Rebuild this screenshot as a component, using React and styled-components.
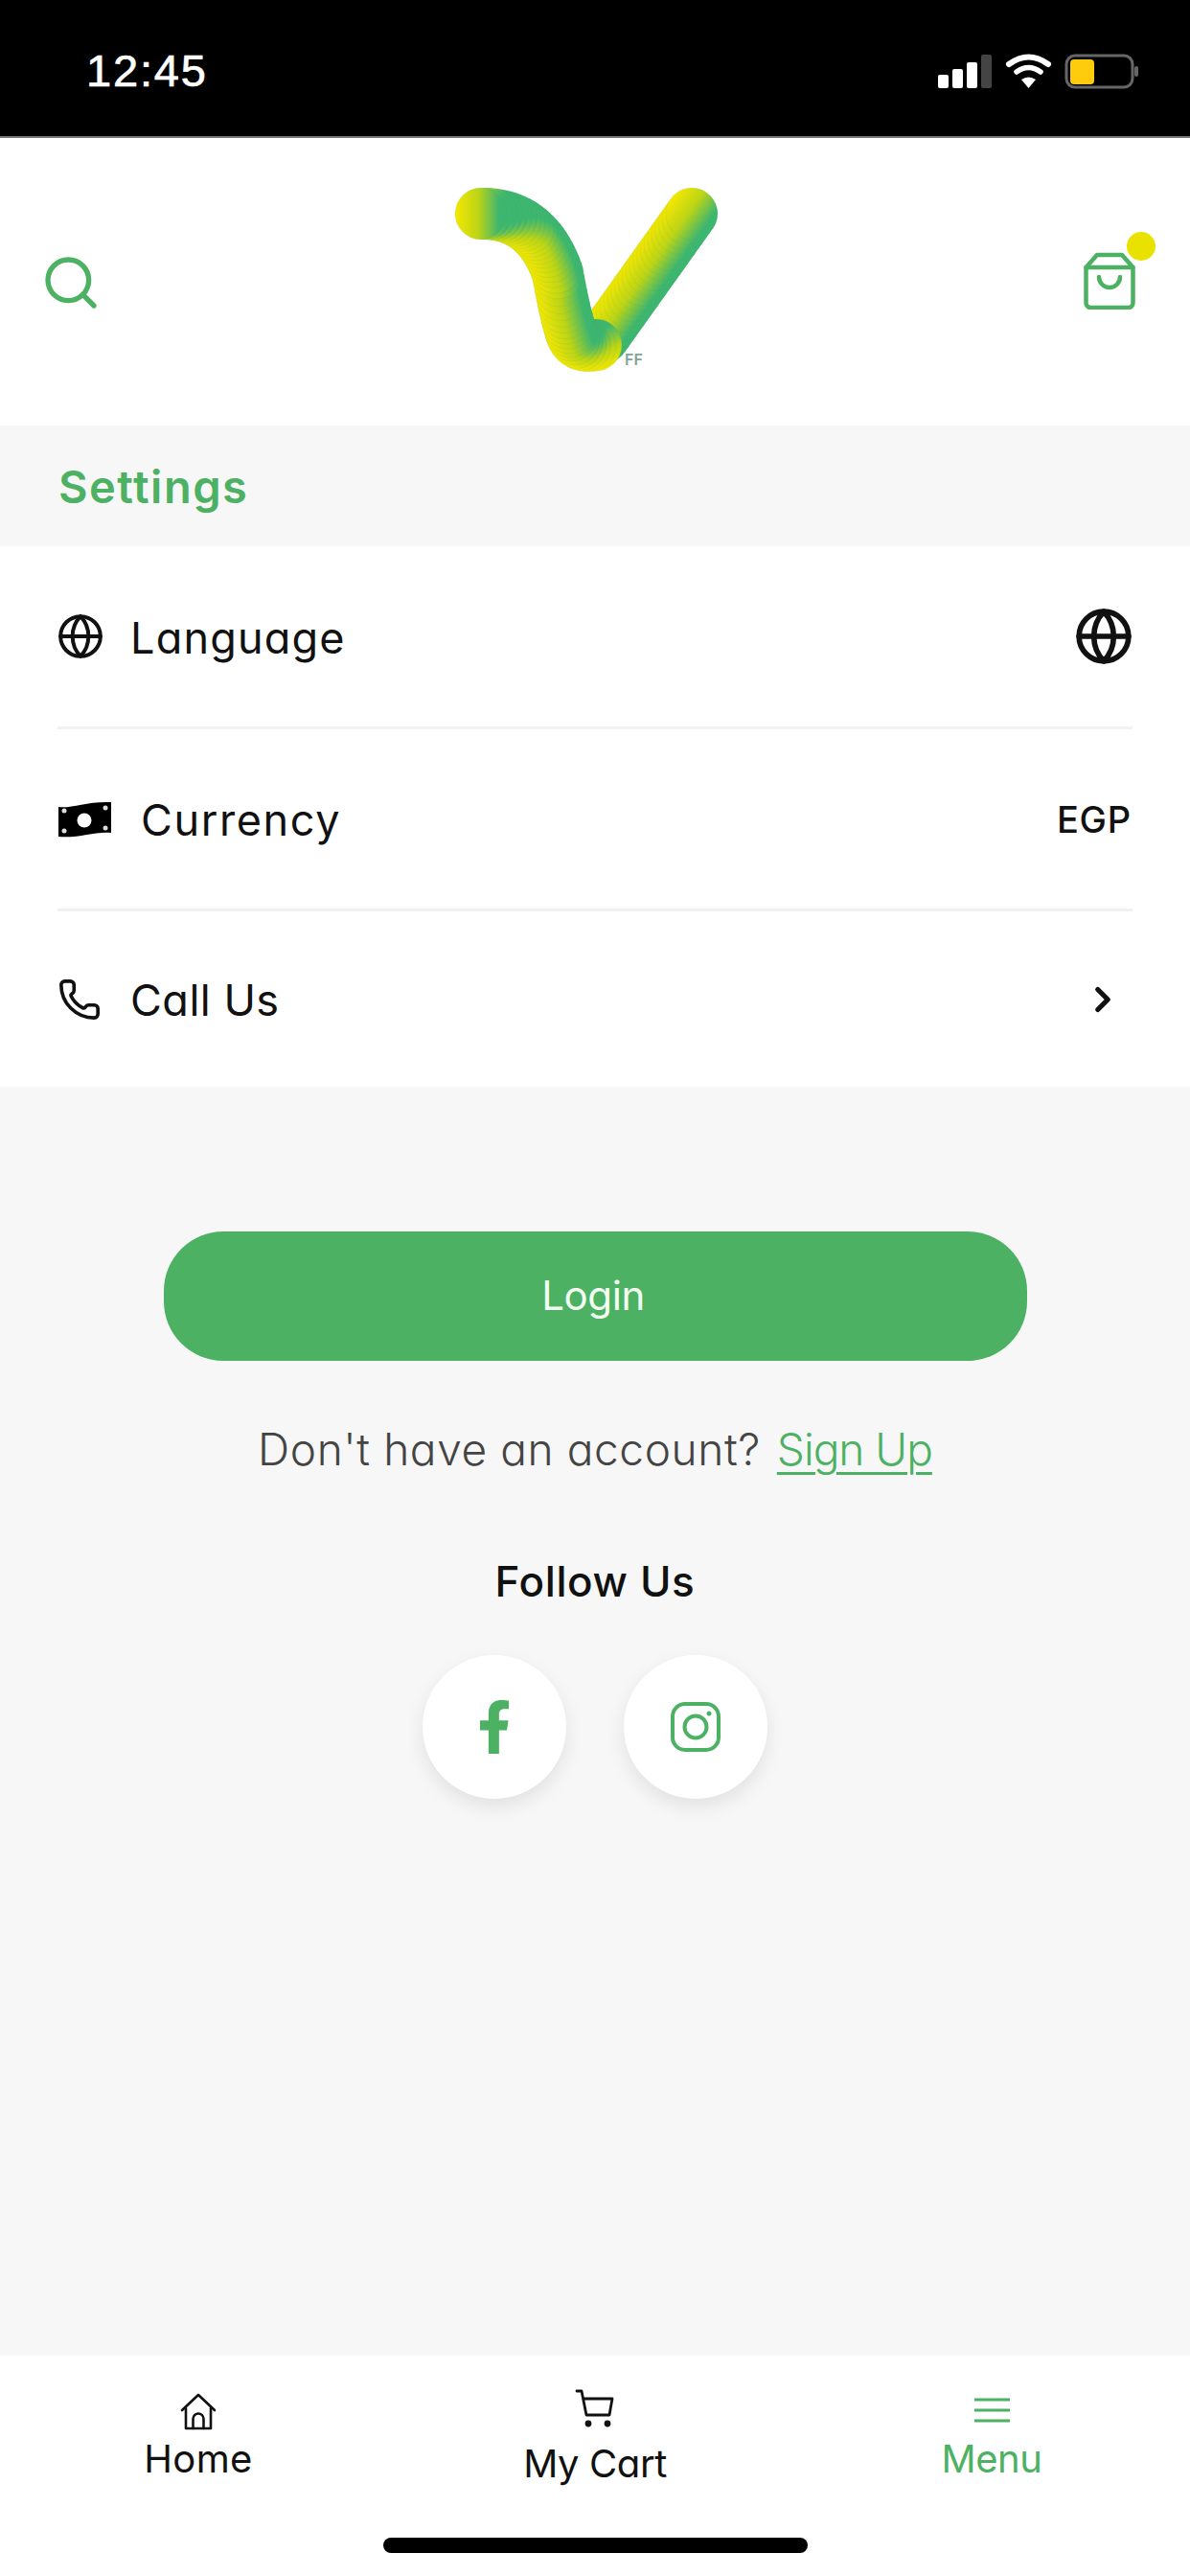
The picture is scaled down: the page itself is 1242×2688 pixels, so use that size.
import React from "react";
import styled, { createGlobalStyle } from "styled-components";
import { Globe, Phone, ChevronRight, Search } from "lucide-react";
import { FaFacebookF } from "react-icons/fa";

const GREEN = "#4db163";
const INK = "#111";

const Global = createGlobalStyle`
  html, body { margin: 0; padding: 0; background: #fff; }
  * { box-sizing: border-box; }
  body { font-family: Inter, "Open Sans", "Liberation Sans", sans-serif; font-feature-settings: "cv11" 1; color: ${INK}; }
`;

const Page = styled.div`
  width: 1242px; height: 2688px; display: flex; flex-direction: column; background: #f7f7f7; overflow: hidden;
`;
const StatusBar = styled.div`
  height: 144px; flex: none; background: #000; border-bottom: 2px solid #777;
  display: flex; justify-content: space-between; align-items: flex-start;
  padding: 47px 46px 0 90px; color: #fff;
`;
const Clock = styled.div`
  font-family: "Liberation Sans", sans-serif; font-size: 47px; line-height: 54px; letter-spacing: 1.8px; font-weight: 400;
  -webkit-text-stroke: .7px #fff;
`;
const StatusIcons = styled.svg`
  display: block; margin-top: 8px;
`;
const Header = styled.header`
  height: 300px; flex: none; background: #fff; display: grid; grid-template-columns: 1fr auto 1fr; align-items: start;
`;
const SearchBtn = styled.div`
  margin: 119px 0 0 42px; color: ${GREEN}; line-height: 0; justify-self: start;
`;
const Logo = styled.svg`
  display: block; margin-top: 36px;
`;
const BagWrap = styled.div`
  position: relative; justify-self: end; width: 54px; height: 60px; margin: 119px 57px 0 0; line-height: 0;
`;
const BagDot = styled.span`
  position: absolute; left: 45px; top: -21px; width: 30px; height: 30px; border-radius: 50%; background: #e9e200;
`;
const SectionBand = styled.div`
  height: 126px; flex: none; display: flex; align-items: center; padding: 0 62px 0 61px;
  color: ${GREEN}; font-size: 47px; font-weight: 600; letter-spacing: 1.5px;
`;
const List = styled.div`
  flex: none; background: #fff; padding: 0 60px;
`;
const Row = styled.div`
  height: ${p => p.$h}px; display: flex; align-items: center; justify-content: space-between;
  border-bottom: ${p => (p.$last ? "none" : "3px solid #f1f1f1")};
`;
const RowLeft = styled.div`
  display: flex; align-items: center; gap: ${p => p.$gap}px;
`;
const RowLabel = styled.span`
  font-size: 45px; font-weight: 400; letter-spacing: ${p => p.$ls}px; color: ${INK}; padding-top: 2px;
`;
const RowValue = styled.span`
  font-size: 38px; font-weight: 500; letter-spacing: .8px; margin-right: 1px;
`;
const RowIconRight = styled.div`
  line-height: 0; margin-right: ${p => p.$mr}px;
`;
const Main = styled.main`
  flex: 1; display: flex; flex-direction: column; align-items: center; padding-top: 151px;
`;
const LoginButton = styled.button`
  width: 901px; height: 135px; border: 0; border-radius: 62px; background: ${GREEN}; color: #f2fff2;
  font: 400 42px Inter, sans-serif; font-feature-settings: "cv11" 1; letter-spacing: -.4px; padding: 0 4px 2px 0;
`;
const AccountLine = styled.p`
  margin: 62px 0 0; font-size: 46px; font-weight: 300; line-height: 60px; color: #444; letter-spacing: .6px;
  display: flex; gap: 17px;
`;
const SignUp = styled.a`
  color: ${GREEN}; letter-spacing: -1px; text-decoration: underline; text-underline-offset: 7px; text-decoration-thickness: 3px;
`;
const FollowTitle = styled.h2`
  margin: 81px 0 0; font-size: 44px; line-height: 54px; font-weight: 500; color: ${INK}; letter-spacing: .6px;
`;
const Socials = styled.div`
  display: flex; gap: 60px; margin-top: 50px;
`;
const SocialCircle = styled.a`
  width: 150px; height: 150px; border-radius: 50%; background: #fff; display: flex; align-items: center; justify-content: center;
  box-shadow: 0 8px 20px rgba(0,0,0,.09); color: ${GREEN};
`;
const BottomNav = styled.nav`
  height: 230px; flex: none; background: #fff; display: flex; flex-direction: column;
`;
const NavGrid = styled.div`
  display: grid; grid-template-columns: repeat(3, 1fr); height: 190px;
`;
const NavItem = styled.div`
  display: flex; flex-direction: column; align-items: center; padding-top: ${p => p.$top}px;
  color: ${p => (p.$active ? GREEN : INK)};
`;
const NavIcon = styled.svg`
  display: block; flex: none;
`;
const NavLabel = styled.span`
  font-size: 40px; line-height: 46px; font-weight: 400; letter-spacing: ${p => p.$ls}px; margin-top: ${p => p.$gap}px;
`;
const HomeBar = styled.div`
  width: 443px; height: 16px; border-radius: 8px; background: #000; align-self: center;
`;

// Logo: a tube of overlapping discs running along the V. Each disc's gradient
// lies across the tube; near the start of the left arm it turns horizontal.
const quad = (a, b, c, t) => [
  (1 - t) * (1 - t) * a[0] + 2 * (1 - t) * t * b[0] + t * t * c[0],
  (1 - t) * (1 - t) * a[1] + 2 * (1 - t) * t * b[1] + t * t * c[1],
];
const rightArm = [];
for (let i = 0; i <= 24; i++) {
  const t = i / 24;
  rightArm.push([630 + (722 - 630) * t, 352 + (223 - 352) * t]);
}
const leftArm = [];
[
  [[622, 360], [603, 364], [597, 350], 6],
  [[597, 350], [590, 330], [582, 285], 11],
  [[582, 285], [560, 222], [502, 223], 20],
].forEach(([a, b, c, n]) => {
  for (let i = 0; i < n; i++) leftArm.push(quad(a, b, c, i / n));
  if (n === 20) leftArm.push(c);
});
const withFlow = (pts, blendCount) =>
  pts.map((p, i) => {
    const a = pts[Math.max(i - 1, 0)];
    const b = pts[Math.min(i + 1, pts.length - 1)];
    const dx = b[0] - a[0];
    const dy = b[1] - a[1];
    const len = Math.hypot(dx, dy) || 1;
    const fromEnd = pts.length - 1 - i;
    const k = blendCount ? Math.max(0, 1 - fromEnd / blendCount) : 0;
    const gx = (-dy / len) * (1 - k) + k;
    const gy = (dx / len) * (1 - k);
    const norm = Math.hypot(gx, gy) || 1;
    return { x: p[0], y: p[1], gx: gx / norm, gy: gy / norm };
  });
const discs = [...withFlow(rightArm, 0), ...withFlow(leftArm, 10)];

const LogoMark = () => (
  <Logo width="342" height="220" viewBox="450 180 342 220">
    <defs>
      {discs.map((d, i) => (
        <linearGradient
          key={i}
          id={`tube${i}`}
          x1={0.5 - d.gx / 2}
          y1={0.5 - d.gy / 2}
          x2={0.5 + d.gx / 2}
          y2={0.5 + d.gy / 2}
        >
          <stop offset="0" stopColor="#f6e800" />
          <stop offset=".45" stopColor="#bcd416" />
          <stop offset=".85" stopColor="#3db670" />
          <stop offset="1" stopColor="#3db670" />
        </linearGradient>
      ))}
      <filter id="soft"><feGaussianBlur stdDeviation=".7" /></filter>
    </defs>
    <g filter="url(#soft)">
      {discs.map((d, i) => (
        <circle key={i} cx={d.x} cy={d.y} r="27" fill={`url(#tube${i})`} stroke="#3a9e5c" strokeOpacity=".1" />
      ))}
    </g>
    <text x="652" y="381" fontSize="16" fontWeight="600" fill="#7fa594" fontFamily="Inter, sans-serif">FF</text>
  </Logo>
);

const StatusGlyphs = () => (
  <StatusIcons width="227" height="38" viewBox="0 0 227 38">
    <rect x="10" y="23" width="11" height="14" rx="2" fill="#fff" />
    <rect x="25" y="17" width="11" height="20" rx="2" fill="#fff" />
    <rect x="40" y="10" width="11" height="27" rx="2" fill="#fff" />
    <rect x="55" y="2" width="11" height="35" rx="2" fill="#444" />
    <path d="M84 12 Q104.500 -3 125 12" fill="none" stroke="#fff" strokeWidth="6" strokeLinecap="round" />
    <path d="M92 20 Q104.500 11 117 20" fill="none" stroke="#fff" strokeWidth="5.500" strokeLinecap="round" />
    <path d="M97 28 Q104.500 23 112 28 L104.500 37 Z" fill="#fff" />
    <rect x="144" y="3" width="69" height="33" rx="9" fill="none" stroke="#666" strokeWidth="3" />
    <rect x="148" y="7" width="25" height="26" rx="4" fill="#ffcb0c" />
    <rect x="215" y="14" width="4" height="11" rx="2" fill="#666" />
  </StatusIcons>
);

const BagIcon = () => (
  <svg width="54" height="60" viewBox="0 0 54 60" fill="none" stroke={GREEN} strokeWidth="4.500" strokeLinecap="round" strokeLinejoin="round">
    <path d="M2.500 16 V53 a5 5 0 0 0 5 5 H46.500 a5 5 0 0 0 5 -5 V16 L40 3 H14 Z" />
    <path d="M2.500 16 H51.500" />
    <path d="M16 26 a11 11 0 0 0 22 0" />
  </svg>
);

const MoneyIcon = () => (
  <svg width="57" height="38" viewBox="0 0 57 38">
    <path d="M1 6 C14 8 30 0 56 1 V33 C40 31 22 39 1 37 Z" fill="#000" />
    <circle cx="28" cy="20" r="7.500" fill="#fff" />
    <circle cx="7" cy="10" r="2.500" fill="#ddd" />
    <circle cx="50" cy="7" r="2.500" fill="#ddd" />
    <circle cx="7" cy="31" r="2.500" fill="#ddd" />
    <circle cx="50" cy="28" r="2.500" fill="#ddd" />
  </svg>
);

const InstagramIcon = () => (
  <svg width="52" height="52" viewBox="0 0 52 52" fill="none" stroke={GREEN} strokeWidth="4">
    <rect x="2" y="2" width="48" height="48" rx="13" />
    <circle cx="26" cy="26" r="11.500" />
    <circle cx="40" cy="12" r="2.500" fill={GREEN} stroke="none" />
  </svg>
);

export default function App() {
  return (
    <Page>
      <Global />
      <StatusBar>
        <Clock>12:45</Clock>
        <StatusGlyphs />
      </StatusBar>
      <Header>
        <SearchBtn><Search size={64} strokeWidth={2} /></SearchBtn>
        <LogoMark />
        <BagWrap><BagIcon /><BagDot /></BagWrap>
      </Header>
      <SectionBand>Settings</SectionBand>
      <List>
        <Row $h={191}>
          <RowLeft $gap={27}>
            <Globe size={50} strokeWidth={1.9} style={{ marginLeft: -1 }} />
            <RowLabel $ls={1.2}>Language</RowLabel>
          </RowLeft>
          <RowIconRight $mr={-1}><Globe size={62} strokeWidth={2.2} /></RowIconRight>
        </Row>
        <Row $h={190}>
          <RowLeft $gap={30}>
            <MoneyIcon />
            <RowLabel $ls={1.6}>Currency</RowLabel>
          </RowLeft>
          <RowValue>EGP</RowValue>
        </Row>
        <Row $h={183} $last>
          <RowLeft $gap={30}>
            <Phone size={46} strokeWidth={1.9} />
            <RowLabel $ls={.5}>Call Us</RowLabel>
          </RowLeft>
          <RowIconRight $mr={10}><ChevronRight size={42} strokeWidth={3} /></RowIconRight>
        </Row>
      </List>
      <Main>
        <LoginButton>Login</LoginButton>
        <AccountLine>
          <span>Don't have an account?</span>
          <SignUp>Sign Up</SignUp>
        </AccountLine>
        <FollowTitle>Follow Us</FollowTitle>
        <Socials>
          <SocialCircle><FaFacebookF size={56} /></SocialCircle>
          <SocialCircle><InstagramIcon /></SocialCircle>
        </Socials>
      </Main>
      <BottomNav>
        <NavGrid>
          <NavItem $top={39}>
            <NavIcon width="38" height="40" viewBox="0 0 38 40" fill="none" stroke={INK} strokeWidth="2.600" strokeLinecap="round" strokeLinejoin="round">
              <path d="M2 18 L19 2 L36 18" />
              <path d="M6 16 V37 H32 V16" />
              <path d="M13.500 37 V27 a5.500 5.500 0 0 1 11 0 V37" />
            </NavIcon>
            <NavLabel $gap={6} $ls={.4}>Home</NavLabel>
          </NavItem>
          <NavItem $top={35}>
            <NavIcon width="42" height="40" viewBox="0 0 42 40" fill="none" stroke={INK} strokeWidth="2.800" strokeLinecap="round" strokeLinejoin="round">
              <path d="M2 2 H7 L12 27 H36 L39 10 H9" />
              <circle cx="14" cy="36" r="2" fill={INK} />
              <circle cx="34" cy="36" r="2" fill={INK} />
            </NavIcon>
            <NavLabel $gap={15} $ls={-.4}>My Cart</NavLabel>
          </NavItem>
          <NavItem $top={44} $active>
            <NavIcon width="37" height="26" viewBox="0 0 37 26" stroke={GREEN} strokeWidth="3.200">
              <path d="M0 2 H37 M0 13 H37 M0 24 H37" />
            </NavIcon>
            <NavLabel $gap={15} $ls={-.4}>Menu</NavLabel>
          </NavItem>
        </NavGrid>
        <HomeBar />
      </BottomNav>
    </Page>
  );
}
